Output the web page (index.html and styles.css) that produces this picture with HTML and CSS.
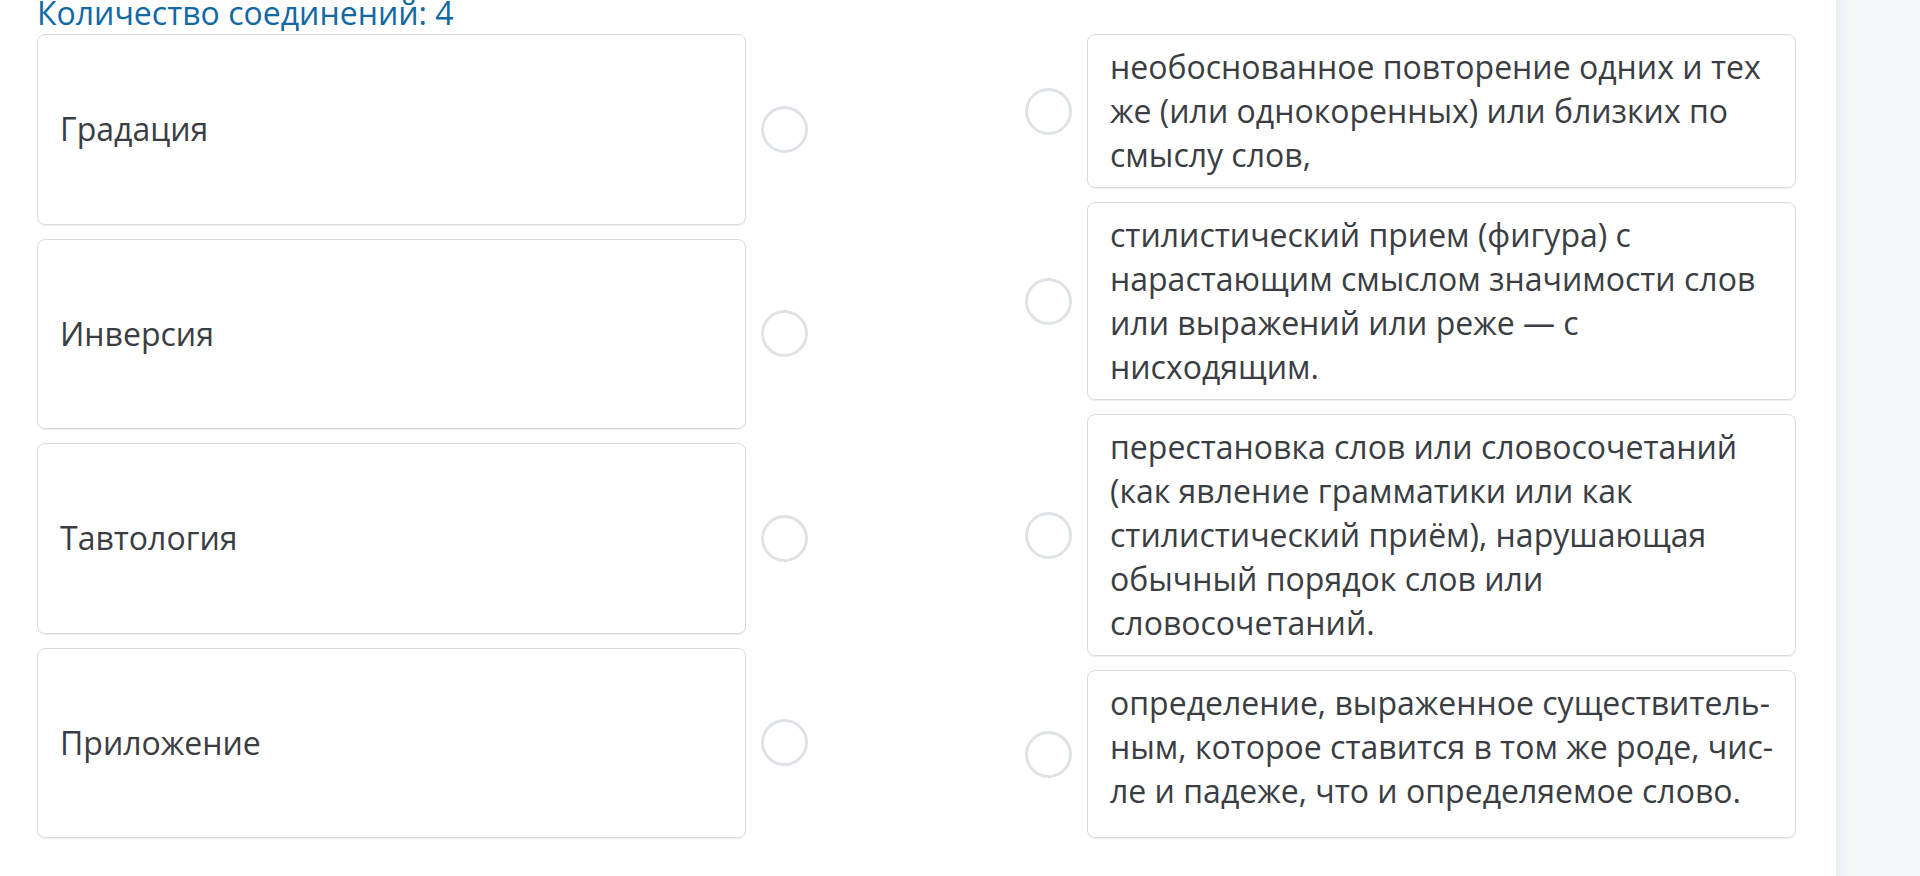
FILE: index.html
```html
<!DOCTYPE html>
<html lang="ru">

<head>
    <meta charset="UTF-8">
    <meta name="viewport" content="width=device-width, initial-scale=1.0">
    <title>Установите соответствие</title>
    <link rel="stylesheet" href="styles.css">
</head>

<body>
    <div class="page">
        <main class="main">
            <div class="count">Количество соединений: 4</div>
            <div class="matching">
                <div class="column left">
                    <div class="item">
                        <div class="card term">Градация</div>
                        <span class="dot"></span>
                    </div>
                    <div class="item">
                        <div class="card term">Инверсия</div>
                        <span class="dot"></span>
                    </div>
                    <div class="item">
                        <div class="card term">Тавтология</div>
                        <span class="dot"></span>
                    </div>
                    <div class="item">
                        <div class="card term">Приложение</div>
                        <span class="dot"></span>
                    </div>
                </div>
                <div class="column right">
                    <div class="item">
                        <span class="dot"></span>
                        <div class="card definition">необоснованное повторение одних и тех<br>же (или однокоренных) или близких по<br>смыслу слов,</div>
                    </div>
                    <div class="item">
                        <span class="dot"></span>
                        <div class="card definition">стилистический прием (фигура) с<br>нарастающим смыслом значимости слов<br>или выражений или реже — с<br>нисходящим.</div>
                    </div>
                    <div class="item">
                        <span class="dot"></span>
                        <div class="card definition">перестановка слов или словосочетаний<br>(как явление грамматики или как<br>стилистический приём), нарушающая<br>обычный порядок слов или<br>словосочетаний.</div>
                    </div>
                    <div class="item">
                        <span class="dot"></span>
                        <div class="card definition last">определение, выраженное существитель-<br>ным, которое ставится в том же роде, чис-<br>ле и падеже, что и определяемое слово.</div>
                    </div>
                </div>
            </div>
        </main>
        <aside class="sidebar"></aside>
    </div>
</body>

</html>
```

FILE: styles.css
```css
body {
    margin: 0;
    padding: 0;
    font-family: 'Open Sans', 'Noto Sans', sans-serif;
    color: #3a3e43;
    background: #fff;
    overflow: hidden;
}

.page {
    display: flex;
    height: 876px;
}

.main {
    flex: 1;
    padding: 0 40px 0 37px;
    margin-top: -4px;
}

.sidebar {
    width: 84px;
    background: linear-gradient(to right, #eceff3, #f4f7fa 14px, #f5f8fb);
}

.count {
    font-size: 32px;
    line-height: 34px;
    color: #1268a3;
    margin-bottom: 4px;
}

.matching {
    display: grid;
    grid-template-columns: 771px 771px;
    justify-content: space-between;
}

.column {
    display: flex;
    flex-direction: column;
    gap: 14px;
}

.left .item {
    flex: 1;
}

.item {
    display: flex;
    align-items: center;
    gap: 15px;
}

.left .item .card {
    align-self: stretch;
}

.card {
    flex: 1;
    min-width: 0;
    border: 1px solid #d9dcdf;
    border-radius: 8px;
    box-shadow: 0 1px 1px rgba(0, 0, 0, 0.07);
    font-size: 32px;
    line-height: 44px;
    padding: 10px 22px;
}

.term {
    display: flex;
    align-items: center;
}

.definition {
    white-space: nowrap;
}

.definition.last {
    min-height: 146px;
}

.dot {
    width: 41px;
    height: 41px;
    border: 3px solid #dfe3e8;
    border-radius: 50%;
    flex: none;
}
```
